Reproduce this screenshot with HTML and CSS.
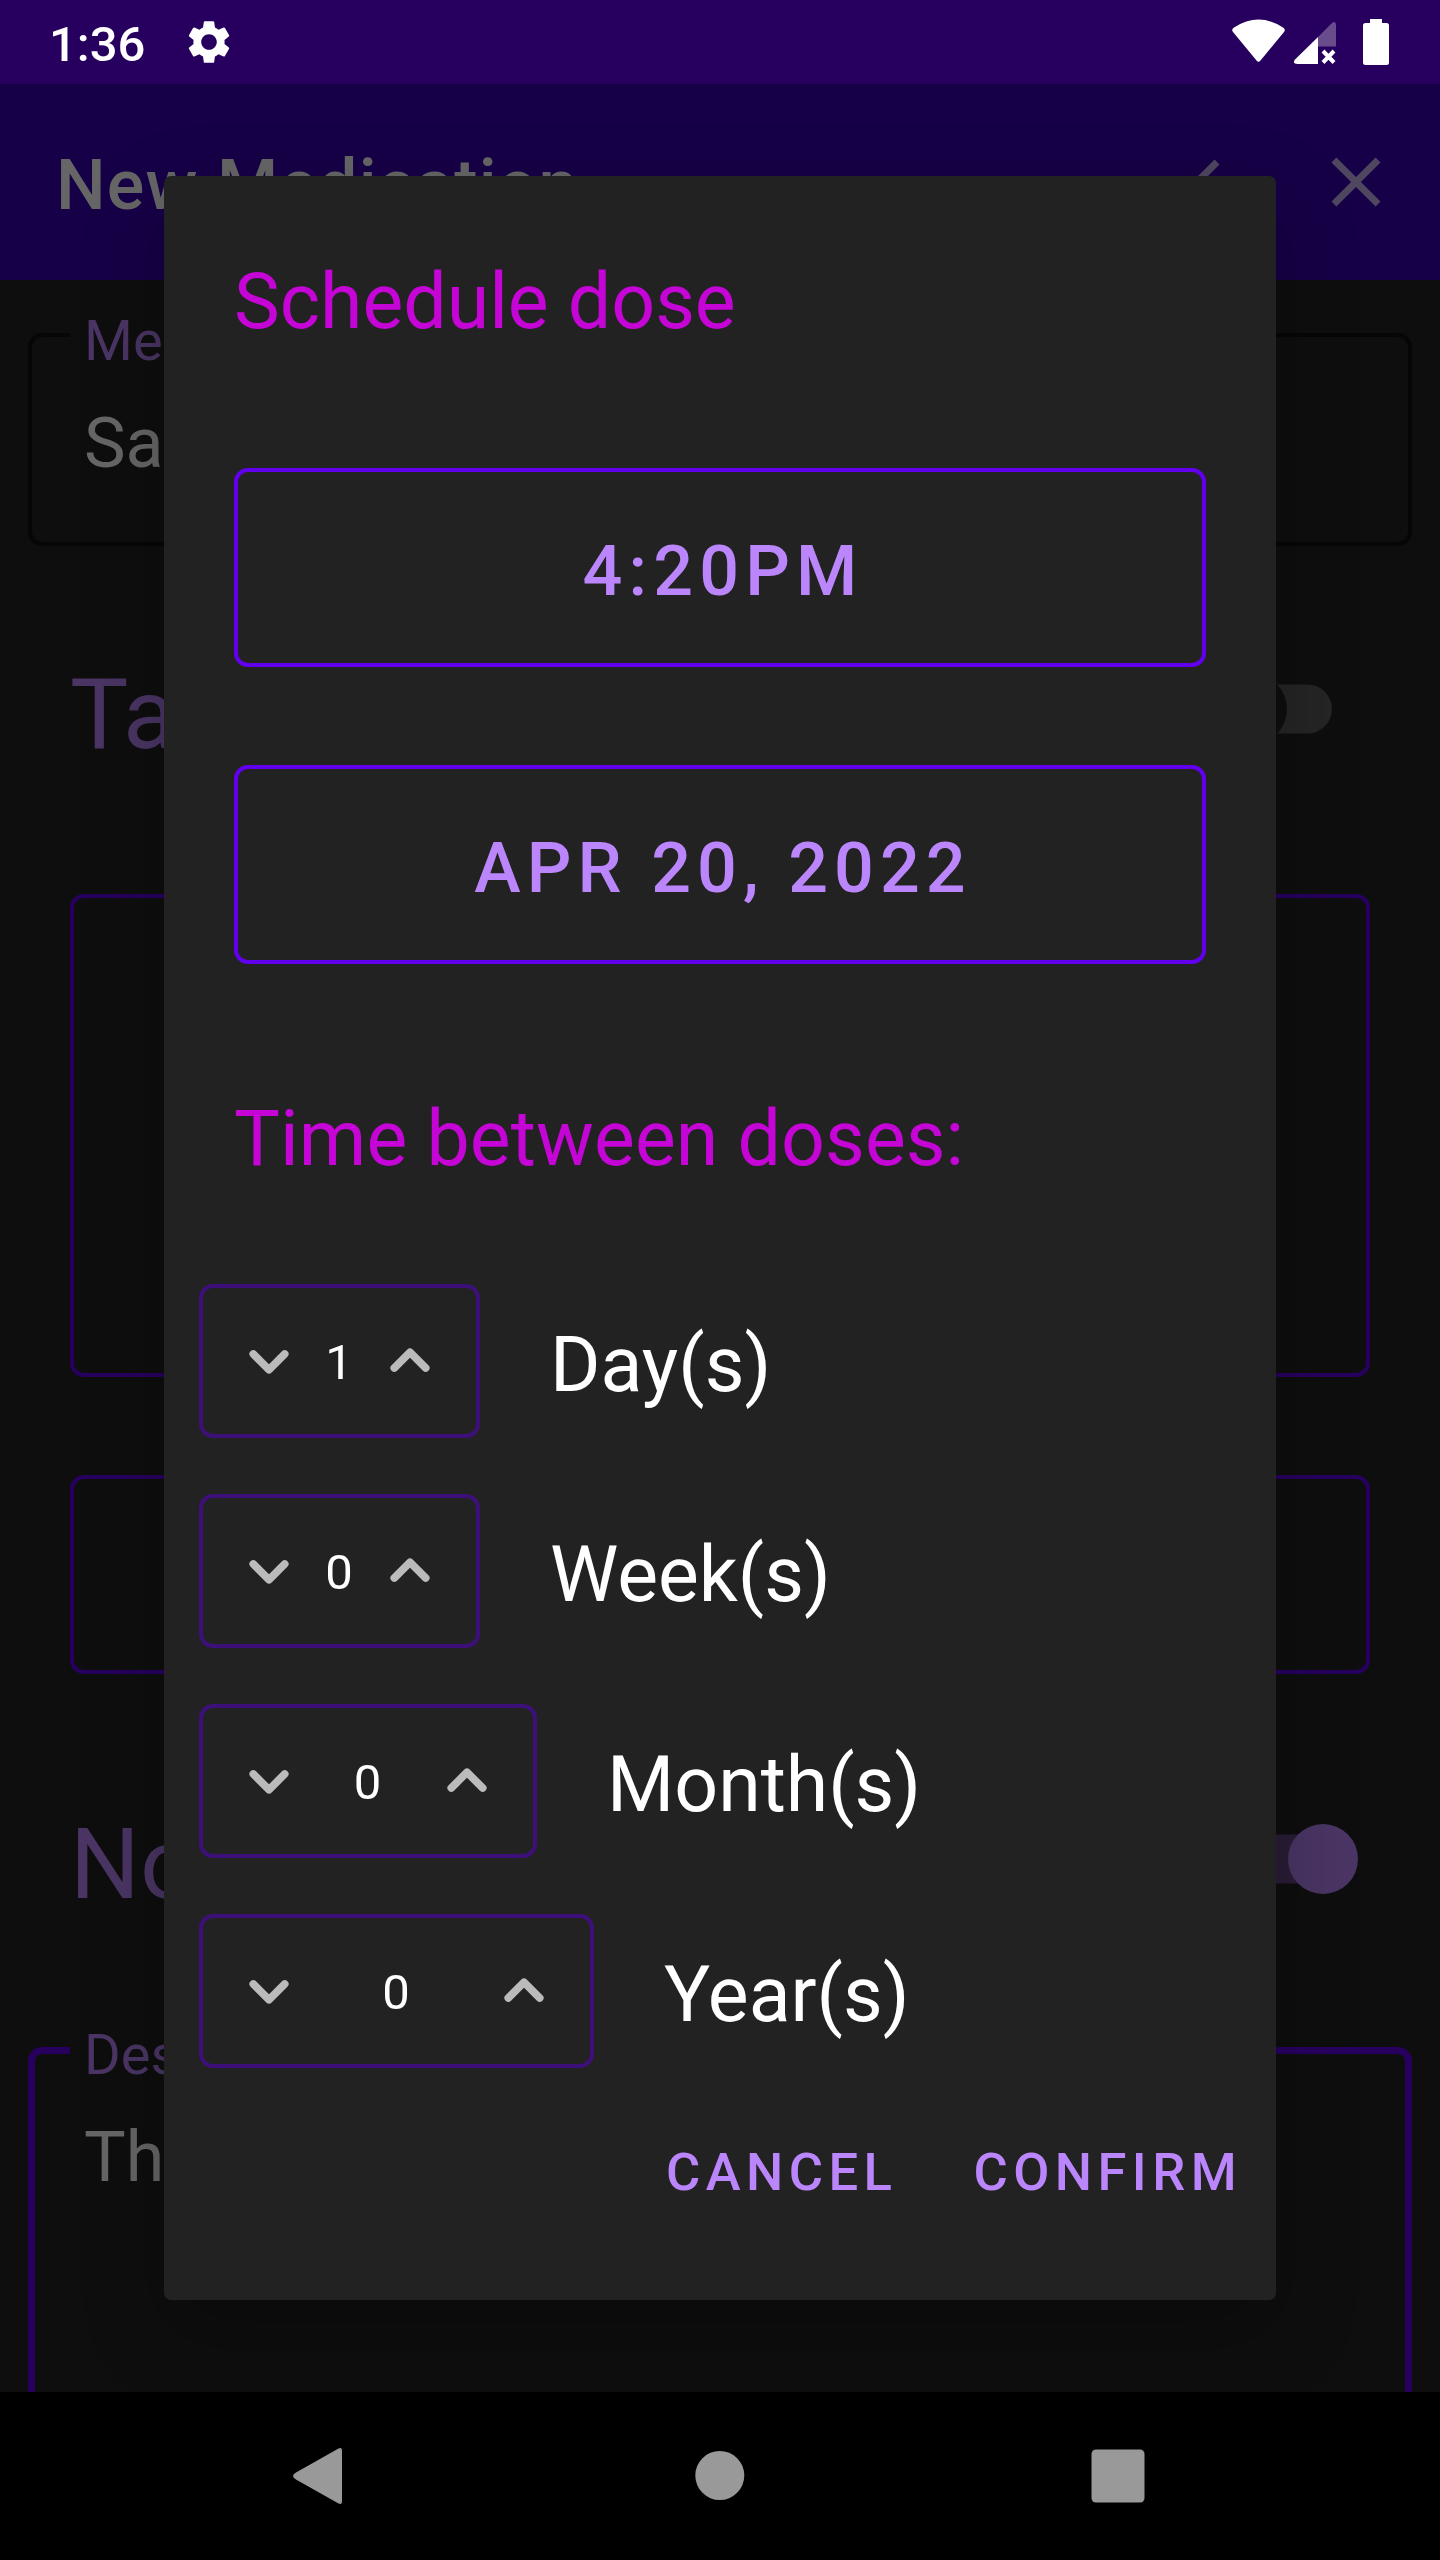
FILE: index.html
```html
<!DOCTYPE html>
<html lang="en">
<head>
<meta charset="utf-8">
<title>New Medication</title>
<link rel="stylesheet" href="styles.css">
</head>
<body>
<div class="phone">
  <header class="status">
    <div class="status-left">
      <span class="clock">1:36</span>
      <svg class="gear" width="52" height="52" viewBox="0 0 24 24"><path fill="#fff" d="M19.14 12.94c.04-.3.06-.61.06-.94 0-.32-.02-.64-.07-.94l2.03-1.58c.18-.14.23-.41.12-.61l-1.92-3.32c-.12-.22-.37-.29-.59-.22l-2.39.96c-.5-.38-1.03-.7-1.62-.94l-.36-2.54c-.04-.24-.24-.41-.48-.41h-3.84c-.24 0-.43.17-.47.41l-.36 2.54c-.59.24-1.13.57-1.62.94l-2.39-.96c-.22-.08-.47 0-.59.22L2.74 8.87c-.12.21-.08.47.12.61l2.03 1.58c-.05.3-.09.63-.09.94s.02.64.07.94l-2.03 1.58c-.18.14-.23.41-.12.61l1.92 3.32c.12.22.37.29.59.22l2.39-.96c.5.38 1.03.7 1.62.94l.36 2.54c.05.24.24.41.48.41h3.84c.24 0 .44-.17.47-.41l.36-2.54c.59-.24 1.13-.56 1.62-.94l2.39.96c.22.08.47 0 .59-.22l1.92-3.32c.12-.22.07-.47-.12-.61l-2.01-1.58zM12 15.6c-1.98 0-3.6-1.62-3.6-3.6s1.62-3.6 3.6-3.6 3.6 1.62 3.6 3.6-1.62 3.6-3.6 3.6z"/></svg>
    </div>
    <svg class="status-icons" width="168" height="52" viewBox="1228 16 168 52">
      <path fill="#fff" d="M1233 32Q1231 29.500 1234 27.500Q1258.500 11.500 1283 27.500Q1286 29.500 1284 32L1260.500 60.500Q1258.500 63 1256.500 60.500Z"/>
      <path fill="#694c8c" d="M1318 37L1332 23Q1336 20.500 1336 25V46.500H1318Z"/>
      <path fill="#fff" d="M1318 37V64H1297Q1292 63.500 1295 59.500Z"/>
      <path stroke="#fff" stroke-width="4" fill="none" d="M1323 51L1334 62.500M1334 51L1323 62.500"/>
      <path fill="#fff" d="M1370 19h12v4h4.500q2.500 0 2.500 2.500v37q0 2.500-2.500 2.500h-21q-2.500 0-2.500-2.500v-37q0-2.500 2.500-2.500h4.500z"/>
    </svg>
  </header>

  <div class="appbar">
    <h1 class="title">New Medication</h1>
    <svg class="action" width="84" height="84" viewBox="0 0 24 24"><path d="M9 16.170L4.830 12l-1.420 1.410L9 19 21 7l-1.410-1.410z"/></svg>
    <svg class="action" width="84" height="84" viewBox="0 0 24 24"><path d="M19 6.410L17.590 5 12 10.590 6.410 5 5 6.410 10.590 12 5 17.590 6.410 19 12 13.410 17.590 19 19 17.590 13.410 12z"/></svg>
  </div>

  <main class="form">
    <fieldset class="field field-name">
      <legend>Med</legend>
      <div class="value">Sample</div>
    </fieldset>
    <div class="toggle-row toggle-taken">
      <span>Taken</span>
      <svg class="switch" width="140" height="84" viewBox="0 0 140 84"><rect x="12" y="17.500" width="105" height="49" rx="24.500" fill="#252525"/><circle cx="37" cy="42" r="35" fill="#0e0e0e"/></svg>
    </div>
    <div class="box box-tall"></div>
    <div class="box box-short"></div>
    <div class="toggle-row toggle-notify">
      <span>Notify</span>
      <svg class="switch" width="150" height="84" viewBox="0 0 150 84"><rect x="18" y="17.500" width="105" height="49" rx="24.500" fill="#291d36"/><circle cx="118" cy="42" r="35" fill="#4a3564"/></svg>
    </div>
    <fieldset class="field field-desc">
      <legend>Description</legend>
      <div class="value">This</div>
    </fieldset>
  </main>

  <nav class="navbar">
    <svg width="84" height="84" viewBox="0 0 84 84"><path d="M12 38.500L54.500 14.500Q58 13 58 17V67Q58 71 54.500 69.500L12 45.500Q6 42 12 38.500Z"/></svg>
    <svg width="84" height="84" viewBox="0 0 84 84"><circle cx="38.800" cy="41.500" r="24.500"/></svg>
    <svg width="84" height="84" viewBox="0 0 84 84"><rect x="14.500" y="15.500" width="53" height="53" rx="4.500"/></svg>
  </nav>

  <section class="dialog">
    <h2 class="heading">Schedule dose</h2>
    <button class="picker picker-time">4:20PM</button>
    <button class="picker picker-date">APR 20, 2022</button>
    <h2 class="heading heading-between">Time between doses:</h2>
    <div class="intervals">
      <div class="interval">
        <div class="stepper"><svg class="chevron" width="46" height="32" viewBox="0 0 46 32"><path d="M7.300 9L23 24.700L38.700 9"/></svg><span>1</span><svg class="chevron" width="46" height="32" viewBox="0 0 46 32"><path d="M7.300 23L23 7.300L38.700 23"/></svg></div>
        <span class="unit">Day(s)</span>
      </div>
      <div class="interval">
        <div class="stepper"><svg class="chevron" width="46" height="32" viewBox="0 0 46 32"><path d="M7.300 9L23 24.700L38.700 9"/></svg><span>0</span><svg class="chevron" width="46" height="32" viewBox="0 0 46 32"><path d="M7.300 23L23 7.300L38.700 23"/></svg></div>
        <span class="unit">Week(s)</span>
      </div>
      <div class="interval">
        <div class="stepper stepper-month"><svg class="chevron" width="46" height="32" viewBox="0 0 46 32"><path d="M7.300 9L23 24.700L38.700 9"/></svg><span>0</span><svg class="chevron" width="46" height="32" viewBox="0 0 46 32"><path d="M7.300 23L23 7.300L38.700 23"/></svg></div>
        <span class="unit">Month(s)</span>
      </div>
      <div class="interval">
        <div class="stepper stepper-year"><svg class="chevron" width="46" height="32" viewBox="0 0 46 32"><path d="M7.300 9L23 24.700L38.700 9"/></svg><span>0</span><svg class="chevron" width="46" height="32" viewBox="0 0 46 32"><path d="M7.300 23L23 7.300L38.700 23"/></svg></div>
        <span class="unit">Year(s)</span>
      </div>
    </div>
    <div class="buttons">
      <button class="text-button">CANCEL</button>
      <button class="text-button">CONFIRM</button>
    </div>
  </section>
</div>
</body>
</html>
```

FILE: styles.css
```css
* { box-sizing: border-box; }
body { margin: 0; background: #000; font-family: Roboto, "Liberation Sans", sans-serif; }
h1, h2 { margin: 0; font-weight: 400; }
button { margin: 0; padding: 0; background: none; border: 0; font-family: inherit; }
svg { display: block; flex: none; }

.phone { position: relative; width: 1440px; height: 2560px; overflow: hidden; display: flex; flex-direction: column; }

.status { height: 84px; flex: none; background: #27005f; display: flex; justify-content: space-between; align-items: center; padding: 0 44px 0 49px; }
.status-left { display: flex; align-items: center; gap: 38px; }
.clock { color: #fff; font-size: 49px; line-height: 58px; font-weight: 500; padding-top: 5px; }

.appbar { height: 196px; flex: none; background: #160047; display: flex; align-items: center; gap: 84px; padding: 0 42px 0 56px; }
.title { flex: 1; color: #666; font-size: 70px; line-height: 82px; font-weight: 500; letter-spacing: 1.150px; padding-top: 6px; }
.action { fill: #4f475f; }

.form { flex: 1; min-height: 0; overflow: hidden; background: #0e0e0e; display: flex; flex-direction: column; }
.field { flex: none; margin: 0 28px; padding: 0 0 0 52px; border: 4px solid #060606; border-radius: 14px; min-width: 0; }
.field legend { color: #4a3564; font-size: 56px; line-height: 66px; padding: 12px 14px 0; margin-left: -14px; }
.value { color: #666; font-size: 70px; line-height: 82px; padding-top: 28px; }
.field-name { margin-top: 16px; height: 250px; }
.field-desc { margin-top: 96px; height: 500px; border: 7px solid #27005f; padding-left: 49px; }
.field-desc legend { padding-top: 9px; }

.toggle-row { flex: none; display: flex; align-items: center; justify-content: space-between; padding: 0 85px 0 70px; height: 116px; color: #4a3564; font-size: 98px; line-height: 116px; }
.toggle-row span { padding-top: 11px; }
.toggle-taken { margin-top: 105px; }
.toggle-notify { margin-top: 127px; }
.switch { overflow: visible; }

.box { flex: none; margin: 0 70px; border: 4px solid #27005f; border-radius: 14px; }
.box-tall { height: 483px; margin-top: 127px; }
.box-short { height: 199px; margin-top: 98px; }

.navbar { height: 168px; flex: none; background: #000; display: flex; align-items: center; justify-content: space-between; padding: 0 279px 0 284px; }
.navbar svg { fill: #999; }

.dialog { position: absolute; left: 164px; top: 176px; width: 1112px; height: 2124px; background: #222; border-radius: 7px; padding: 81px 0 0 70px; box-shadow: 0 30px 80px rgba(0, 0, 0, .25); display: flex; flex-direction: column; }
.heading { color: #c405d6; font-size: 77px; line-height: 90px; }
.picker { flex: none; width: 972px; height: 199px; border: 4px solid #6200ee; border-radius: 14px; padding: 7px 0 0 6px; color: #bb86fc; font-size: 70px; font-weight: 500; letter-spacing: 6.230px; }
.picker-time { margin-top: 121px; }
.picker-date { margin-top: 98px; letter-spacing: 6.100px; }
.heading-between { margin-top: 130px; letter-spacing: .080px; }

.intervals { display: flex; flex-direction: column; gap: 56px; margin: 100px 0 0 -35px; }
.interval { display: flex; align-items: center; gap: 70px; }
.stepper { width: 281px; height: 154px; border: 4px solid #3d1079; border-radius: 14px; display: flex; align-items: center; justify-content: space-between; padding: 0 43px; color: #fff; font-size: 49px; }
.stepper span { padding: 3px 1px 0 0; }
.stepper-month { width: 338px; }
.stepper-year { width: 395px; }
.chevron path { fill: none; stroke: #bbb; stroke-width: 7.700px; stroke-linecap: round; stroke-linejoin: round; }
.unit { color: #fff; font-size: 77px; line-height: 90px; padding-top: 7px; }

.buttons { display: flex; justify-content: flex-end; gap: 76px; margin-top: 73px; padding-right: 34px; }
.text-button { color: #bb86fc; font-size: 52.500px; line-height: 62px; font-weight: 500; letter-spacing: 5.450px; }
```
